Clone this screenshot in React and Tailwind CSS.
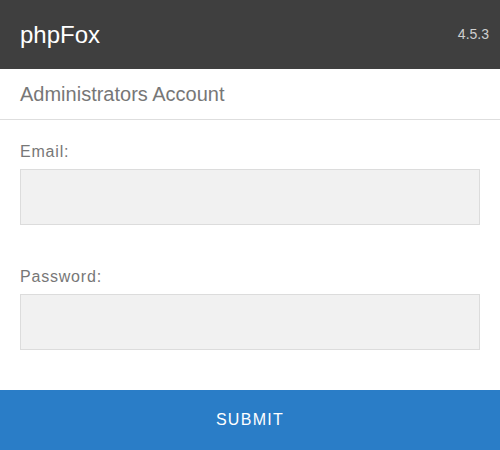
import React from "react";

function Field({ label, type }) {
  return (
    <div>
      <label className="block text-[16px] leading-6 tracking-[0.05em] text-[#777] mb-[5px]">
        {label}
      </label>
      <input
        type={type}
        className="block w-full h-[56px] bg-[#f1f1f1] border border-[#dcdcdc] px-3 text-[16px] text-[#555] outline-none"
      />
    </div>
  );
}

export default function App() {
  return (
    <div className="w-[500px] h-[450px] bg-white flex flex-col font-['Liberation_Sans',Arial,sans-serif]">
      {/* Top bar */}
      <header className="h-[69px] bg-[#3f3f3f] flex items-center justify-between pl-5 pr-[11px]">
        <span className="text-[24px] text-white">phpFox</span>
        <span className="text-[14px] text-[#cfcfcf]">4.5.3</span>
      </header>

      {/* Section title */}
      <div className="h-[51px] border-b border-[#dedede] flex items-center px-5">
        <h2 className="text-[20px] text-[#777]">Administrators Account</h2>
      </div>

      {/* Form */}
      <form className="flex-1 flex flex-col">
        <div className="px-5 pt-5 flex flex-col gap-10">
          <Field label="Email:" type="email" />
          <Field label="Password:" type="password" />
        </div>
        <button
          type="button"
          className="mt-auto h-[60px] w-full bg-[#2a7dc7] text-white text-[16px] tracking-[0.08em]"
        >
          SUBMIT
        </button>
      </form>
    </div>
  );
}
